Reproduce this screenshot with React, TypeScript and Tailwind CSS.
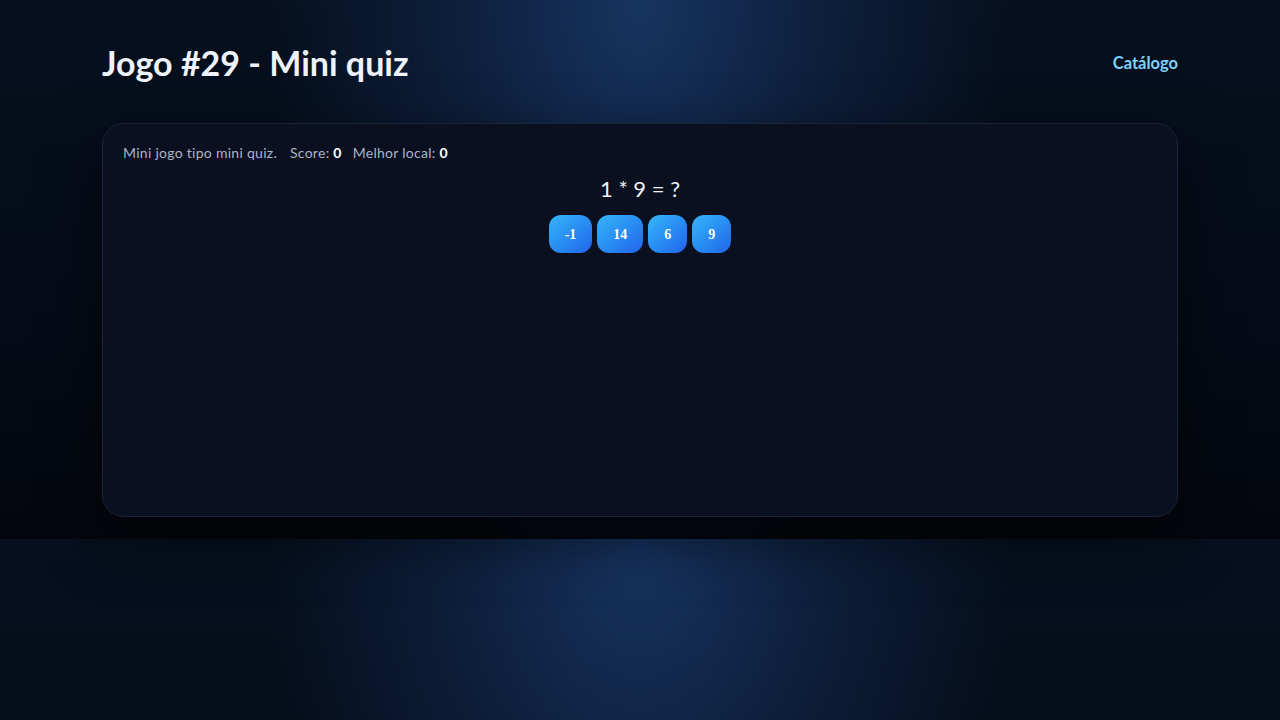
import React, { useState } from 'react';

const options = [-1, 14, 6, 9];

const App: React.FC = () => {
    const [score, setScore] = useState(0);
    const [best] = useState(0);

    return (
        <div
            className="min-h-screen text-slate-100 font-['Lato','Liberation_Sans',sans-serif]"
            style={{
                backgroundColor: '#040810',
                backgroundImage:
                    'radial-gradient(370px 580px at 50% 0%, rgba(24,54,100,0.95) 0%, rgba(20,44,84,0.6) 45%, rgba(6,14,28,0) 100%), linear-gradient(to bottom, #06101e 0%, #050b17 60%, #03060c 100%)',
                backgroundSize: '100% 539px',
                backgroundRepeat: 'repeat-y',
            }}
        >
            <div className="mx-auto w-[1076px] pt-[40px] pb-[23px]">
                {/* topo */}
                <header className="flex items-center justify-between h-[46px]">
                    <h1 className="text-[34px] font-bold text-[#eef3fb] leading-none">Jogo #29 - Mini quiz</h1>
                    <a href="#" className="text-[16.5px] font-bold text-[#7dd3fc]">Catálogo</a>
                </header>

                {/* cartão do jogo */}
                <main className="mt-[37px] h-[394px] rounded-[22px] border border-[#1c2537] bg-[#0a1020] px-[20px] pt-[20px] shadow-[0_20px_60px_rgba(0,0,0,0.55)]">
                    <p className="text-[14px] tracking-[0.02em] leading-[18px] text-[#aab4c6]">
                        Mini jogo tipo mini quiz.
                        <span className="ml-[13px]">Score: <b className="text-white">{score}</b></span>
                        <span className="ml-[11px]">Melhor local: <b className="text-white">{best}</b></span>
                    </p>

                    <div className="mt-[13px] text-center text-[22px] leading-[28px] text-[#eef2f8]">1 * 9 = ?</div>

                    <div className="mt-[12px] flex justify-center gap-[5px]">
                        {options.map((o) => (
                            <button
                                key={o}
                                onClick={() => o === 9 && setScore(score + 1)}
                                className="h-[38px] rounded-[12px] px-[16px] bg-gradient-to-br from-[#38b6f8] to-[#2563eb] text-[14px] font-bold text-white font-['Liberation_Serif',serif]"
                            >
                                {o}
                            </button>
                        ))}
                    </div>
                </main>
            </div>
        </div>
    );
};

export default App;
